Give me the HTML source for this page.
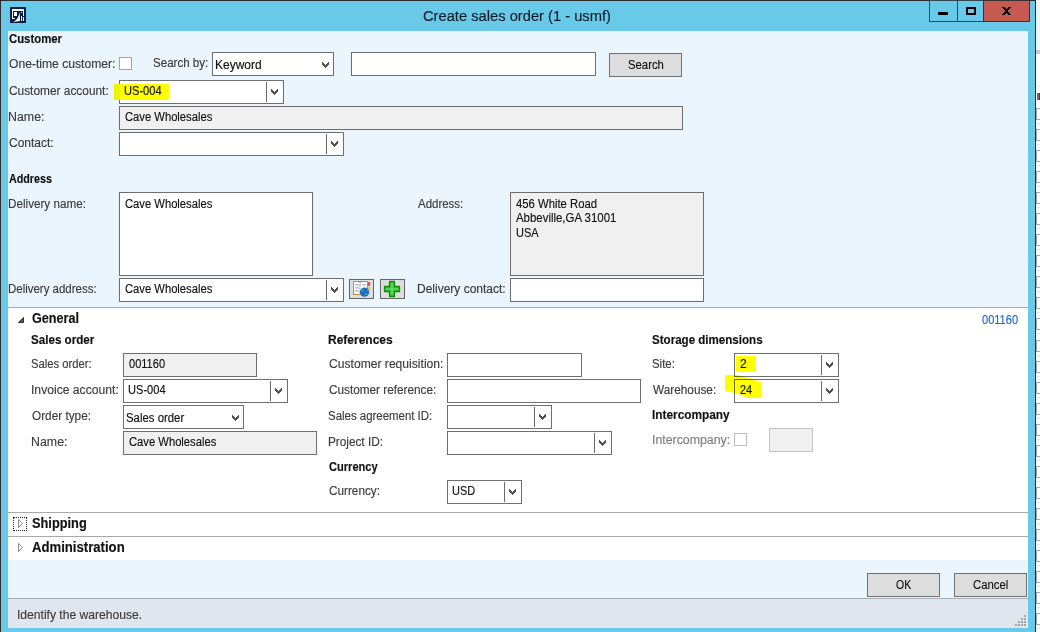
<!DOCTYPE html>
<html><head><meta charset="utf-8"><title>Create sales order</title>
<style>
html,body{margin:0;padding:0;width:1040px;height:632px;overflow:hidden;background:#69c9e9}
.a{position:absolute;box-sizing:border-box}
.t{position:absolute;white-space:nowrap;font-family:"Liberation Sans",sans-serif;transform-origin:0 0;-webkit-text-stroke:0.15px currentColor}
</style></head><body>
<div class="a" style="left:0px;top:0px;width:1040px;height:632px;background:#69c9e9;"></div>
<div class="a" style="left:1036px;top:0px;width:4px;height:632px;background:#ffffff;"></div>
<div class="a" style="left:1036px;top:0px;width:4px;height:50px;background:#eef3f8;"></div>
<div class="a" style="left:1036px;top:50px;width:4px;height:4px;background:#c9c9c9;"></div>
<div class="a" style="left:1036px;top:86px;width:4px;height:1px;background:#e3ecf5;"></div>
<div class="a" style="left:1037px;top:93px;width:2px;height:7px;background:#8a5a6a;"></div>
<div class="a" style="left:1039px;top:93px;width:1px;height:7px;background:#3a3a7a;"></div>
<div class="a" style="left:1036px;top:108px;width:4px;height:12px;background:#ffffff;border:1px solid #a6a6a6;border-right:none;"></div>
<div class="a" style="left:1036px;top:123px;width:4px;height:1px;background:#dde8f4;"></div>
<div class="a" style="left:1036px;top:129px;width:4px;height:12px;background:#ffffff;border:1px solid #a6a6a6;border-right:none;"></div>
<div class="a" style="left:1036px;top:144px;width:4px;height:1px;background:#dde8f4;"></div>
<div class="a" style="left:1036px;top:150px;width:4px;height:12px;background:#ffffff;border:1px solid #a6a6a6;border-right:none;"></div>
<div class="a" style="left:1036px;top:165px;width:4px;height:1px;background:#dde8f4;"></div>
<div class="a" style="left:1036px;top:171px;width:4px;height:12px;background:#ffffff;border:1px solid #a6a6a6;border-right:none;"></div>
<div class="a" style="left:1036px;top:186px;width:4px;height:1px;background:#dde8f4;"></div>
<div class="a" style="left:1036px;top:192px;width:4px;height:12px;background:#ffffff;border:1px solid #a6a6a6;border-right:none;"></div>
<div class="a" style="left:1036px;top:207px;width:4px;height:1px;background:#dde8f4;"></div>
<div class="a" style="left:1036px;top:213px;width:4px;height:12px;background:#ffffff;border:1px solid #a6a6a6;border-right:none;"></div>
<div class="a" style="left:1036px;top:228px;width:4px;height:1px;background:#dde8f4;"></div>
<div class="a" style="left:1036px;top:234px;width:4px;height:12px;background:#ffffff;border:1px solid #a6a6a6;border-right:none;"></div>
<div class="a" style="left:1036px;top:249px;width:4px;height:1px;background:#dde8f4;"></div>
<div class="a" style="left:1036px;top:255px;width:4px;height:12px;background:#ffffff;border:1px solid #a6a6a6;border-right:none;"></div>
<div class="a" style="left:1036px;top:270px;width:4px;height:1px;background:#dde8f4;"></div>
<div class="a" style="left:1036px;top:276px;width:4px;height:12px;background:#ffffff;border:1px solid #a6a6a6;border-right:none;"></div>
<div class="a" style="left:1036px;top:291px;width:4px;height:1px;background:#dde8f4;"></div>
<div class="a" style="left:1036px;top:297px;width:4px;height:12px;background:#ffffff;border:1px solid #a6a6a6;border-right:none;"></div>
<div class="a" style="left:1036px;top:312px;width:4px;height:1px;background:#dde8f4;"></div>
<div class="a" style="left:1036px;top:318px;width:4px;height:12px;background:#ffffff;border:1px solid #a6a6a6;border-right:none;"></div>
<div class="a" style="left:1036px;top:333px;width:4px;height:1px;background:#dde8f4;"></div>
<div class="a" style="left:1036px;top:340px;width:4px;height:12px;background:#ffffff;border:1px solid #a6a6a6;border-right:none;"></div>
<div class="a" style="left:1036px;top:355px;width:4px;height:1px;background:#dde8f4;"></div>
<div class="a" style="left:1036px;top:361px;width:4px;height:12px;background:#ffffff;border:1px solid #a6a6a6;border-right:none;"></div>
<div class="a" style="left:1036px;top:376px;width:4px;height:1px;background:#dde8f4;"></div>
<div class="a" style="left:1036px;top:382px;width:4px;height:12px;background:#ffffff;border:1px solid #a6a6a6;border-right:none;"></div>
<div class="a" style="left:1036px;top:397px;width:4px;height:1px;background:#dde8f4;"></div>
<div class="a" style="left:1036px;top:403px;width:4px;height:12px;background:#ffffff;border:1px solid #a6a6a6;border-right:none;"></div>
<div class="a" style="left:1036px;top:418px;width:4px;height:1px;background:#dde8f4;"></div>
<div class="a" style="left:1036px;top:424px;width:4px;height:12px;background:#ffffff;border:1px solid #a6a6a6;border-right:none;"></div>
<div class="a" style="left:1036px;top:439px;width:4px;height:1px;background:#dde8f4;"></div>
<div class="a" style="left:1036px;top:445px;width:4px;height:12px;background:#ffffff;border:1px solid #a6a6a6;border-right:none;"></div>
<div class="a" style="left:1036px;top:460px;width:4px;height:1px;background:#dde8f4;"></div>
<div class="a" style="left:1036px;top:466px;width:4px;height:12px;background:#ffffff;border:1px solid #a6a6a6;border-right:none;"></div>
<div class="a" style="left:1036px;top:481px;width:4px;height:1px;background:#dde8f4;"></div>
<div class="a" style="left:1036px;top:487px;width:4px;height:12px;background:#ffffff;border:1px solid #a6a6a6;border-right:none;"></div>
<div class="a" style="left:1036px;top:502px;width:4px;height:1px;background:#dde8f4;"></div>
<div class="a" style="left:1036px;top:508px;width:4px;height:12px;background:#ffffff;border:1px solid #a6a6a6;border-right:none;"></div>
<div class="a" style="left:1036px;top:523px;width:4px;height:1px;background:#dde8f4;"></div>
<div class="a" style="left:1036px;top:529px;width:4px;height:12px;background:#ffffff;border:1px solid #a6a6a6;border-right:none;"></div>
<div class="a" style="left:1036px;top:544px;width:4px;height:1px;background:#dde8f4;"></div>
<div class="a" style="left:1036px;top:550px;width:4px;height:12px;background:#ffffff;border:1px solid #a6a6a6;border-right:none;"></div>
<div class="a" style="left:1036px;top:565px;width:4px;height:1px;background:#dde8f4;"></div>
<div class="a" style="left:1036px;top:571px;width:4px;height:12px;background:#ffffff;border:1px solid #a6a6a6;border-right:none;"></div>
<div class="a" style="left:1036px;top:586px;width:4px;height:1px;background:#dde8f4;"></div>
<div class="a" style="left:1036px;top:592px;width:4px;height:12px;background:#ffffff;border:1px solid #a6a6a6;border-right:none;"></div>
<div class="a" style="left:1036px;top:607px;width:4px;height:1px;background:#dde8f4;"></div>
<div class="a" style="left:1036px;top:613px;width:4px;height:12px;background:#ffffff;border:1px solid #a6a6a6;border-right:none;"></div>
<div class="a" style="left:1036px;top:628px;width:4px;height:1px;background:#dde8f4;"></div>
<div class="a" style="left:0px;top:0px;width:1036px;height:1px;background:#2d2d2d;"></div>
<div class="a" style="left:0px;top:0px;width:1px;height:632px;background:#2d2d2d;"></div>
<div class="a" style="left:1035px;top:0px;width:1px;height:632px;background:#2d2d2d;"></div>
<div class="a" style="left:929px;top:0px;width:29px;height:22px;background:#69c9e9;border:1px solid #34474f;"></div>
<div class="a" style="left:957px;top:0px;width:27px;height:22px;background:#69c9e9;border:1px solid #34474f;"></div>
<div class="a" style="left:983px;top:0px;width:47px;height:22px;background:#c75a50;border:1px solid #3d3030;"></div>
<div class="a" style="left:938px;top:12px;width:10px;height:3px;background:#000;"></div>
<div class="a" style="left:966px;top:7px;width:10px;height:8px;border:1px solid #000;border-width:2px;"></div>
<svg class="a" style="left:1002px;top:7px" width="9" height="8" viewBox="0 0 9 8" shape-rendering="crispEdges" fill="#000"><rect x="0" y="0" width="3" height="1"/><rect x="6" y="0" width="3" height="1"/><rect x="1" y="1" width="3" height="1"/><rect x="5" y="1" width="3" height="1"/><rect x="2" y="2" width="5" height="1"/><rect x="3" y="3" width="3" height="1"/><rect x="3" y="4" width="3" height="1"/><rect x="2" y="5" width="5" height="1"/><rect x="1" y="6" width="3" height="1"/><rect x="5" y="6" width="3" height="1"/><rect x="0" y="7" width="3" height="1"/><rect x="6" y="7" width="3" height="1"/></svg>
<svg class="a" style="left:10px;top:7px" width="16" height="16" viewBox="0 0 16 16" shape-rendering="crispEdges"><rect width="16" height="16" fill="#0a1d4a"/><rect x="2" y="2" width="12" height="2" fill="#fff"/><rect x="13" y="2" width="1" height="7" fill="#fff"/><rect x="2" y="2" width="1" height="10" fill="#fff"/><rect x="2" y="11" width="3" height="1" fill="#fff"/><rect x="4" y="5" width="3" height="4" fill="#fff"/><rect x="11" y="5" width="1" height="1" fill="#fff"/><rect x="11" y="9" width="1" height="5" fill="#fff"/><rect x="13" y="10" width="1" height="4" fill="#fff"/></svg>
<svg class="a" style="left:10px;top:7px" width="16" height="16" viewBox="0 0 16 16"><path d="M3.5 15 Q8.5 12.5 9.6 5 L10 14 Z" fill="#fff"/></svg>
<div class="t" style="left:423.05px;top:6px;font-size:15.5px;line-height:20px;color:#0f1a24;transform:scaleX(0.9487);">Create sales order (1 - usmf)</div>
<div class="a" style="left:8px;top:31px;width:1020px;height:597px;background:#eaf5fd;"></div>
<div class="a" style="left:8px;top:308px;width:1020px;height:252px;background:#ffffff;"></div>
<div class="a" style="left:8px;top:307px;width:1020px;height:1px;background:#a9a9a9;"></div>
<div class="a" style="left:8px;top:512px;width:1020px;height:1px;background:#a9a9a9;"></div>
<div class="a" style="left:8px;top:536px;width:1020px;height:1px;background:#a9a9a9;"></div>
<div class="a" style="left:8px;top:598px;width:1020px;height:1px;background:#a3adb8;"></div>
<div class="a" style="left:8px;top:599px;width:1020px;height:29px;background:#dfe6ee;"></div>
<div class="t" style="left:9.00px;top:29px;font-size:12px;line-height:20px;font-weight:700;color:#111111;transform:scaleX(0.9455);">Customer</div>
<div class="t" style="left:9.00px;top:54px;font-size:12px;line-height:20px;color:#3c3c3c;transform:scaleX(1.0097);">One-time customer:</div>
<div class="a" style="left:119px;top:57px;width:13px;height:13px;background:#fff;border:1px solid #a2a2a2;"></div>
<div class="t" style="left:153.04px;top:53px;font-size:12px;line-height:20px;color:#3c3c3c;transform:scaleX(0.9630);">Search by:</div>
<div class="a" style="left:212px;top:52px;width:122px;height:24px;background:#fff;border:1px solid #6e6e6e;"></div>
<svg class="a" style="left:322px;top:62px" width="7" height="6" viewBox="0 0 7 6" shape-rendering="crispEdges" fill="#505050"><rect x="0" y="0" width="1" height="1"/><rect x="6" y="0" width="1" height="1"/><rect x="0" y="1" width="2" height="1"/><rect x="5" y="1" width="2" height="1"/><rect x="0" y="2" width="3" height="1"/><rect x="4" y="2" width="3" height="1"/><rect x="1" y="3" width="5" height="1"/><rect x="2" y="4" width="3" height="1"/><rect x="3" y="5" width="1" height="1"/></svg>
<div class="t" style="left:215.00px;top:55px;font-size:12px;line-height:20px;color:#111111;">Keyword</div>
<div class="a" style="left:351px;top:52px;width:245px;height:24px;background:#fff;border:1px solid #6e6e6e;"></div>
<div class="a" style="left:609px;top:53px;width:73px;height:24px;background:#dddddd;border:1px solid #707070;"></div>
<div class="t" style="left:627.56px;top:55px;font-size:12px;line-height:20px;color:#111111;transform:scaleX(0.9429);">Search</div>
<div class="t" style="left:9.00px;top:81px;font-size:12px;line-height:20px;color:#3c3c3c;transform:scaleX(0.9899);">Customer account:</div>
<div class="a" style="left:119px;top:80px;width:165px;height:24px;background:#fff;border:1px solid #6e6e6e;"></div>
<div class="a" style="left:266px;top:82px;width:1px;height:20px;background:#6a6a6a;"></div>
<svg class="a" style="left:271px;top:89px" width="7" height="6" viewBox="0 0 7 6" shape-rendering="crispEdges" fill="#505050"><rect x="0" y="0" width="1" height="1"/><rect x="6" y="0" width="1" height="1"/><rect x="0" y="1" width="2" height="1"/><rect x="5" y="1" width="2" height="1"/><rect x="0" y="2" width="3" height="1"/><rect x="4" y="2" width="3" height="1"/><rect x="1" y="3" width="5" height="1"/><rect x="2" y="4" width="3" height="1"/><rect x="3" y="5" width="1" height="1"/></svg>
<div class="a" style="left:120px;top:84px;width:49px;height:16px;background:#ffff00;"></div>
<div class="a" style="left:114px;top:84px;width:6px;height:16px;background:#ebf500;"></div>
<div class="t" style="left:124.08px;top:81px;font-size:12px;line-height:20px;color:#111111;transform:scaleX(0.9231);">US-004</div>
<div class="t" style="left:7.97px;top:107px;font-size:12px;line-height:20px;color:#3c3c3c;transform:scaleX(1.0312);">Name:</div>
<div class="a" style="left:119px;top:106px;width:564px;height:24px;background:#f0f0f0;border:1px solid #6e6e6e;"></div>
<div class="t" style="left:125.00px;top:107px;font-size:12px;line-height:20px;color:#111111;transform:scaleX(0.9348);">Cave Wholesales</div>
<div class="t" style="left:9.00px;top:133px;font-size:12px;line-height:20px;color:#3c3c3c;">Contact:</div>
<div class="a" style="left:119px;top:132px;width:225px;height:24px;background:#fff;border:1px solid #6e6e6e;"></div>
<div class="a" style="left:326px;top:134px;width:1px;height:20px;background:#6a6a6a;"></div>
<svg class="a" style="left:331px;top:141px" width="7" height="6" viewBox="0 0 7 6" shape-rendering="crispEdges" fill="#505050"><rect x="0" y="0" width="1" height="1"/><rect x="6" y="0" width="1" height="1"/><rect x="0" y="1" width="2" height="1"/><rect x="5" y="1" width="2" height="1"/><rect x="0" y="2" width="3" height="1"/><rect x="4" y="2" width="3" height="1"/><rect x="1" y="3" width="5" height="1"/><rect x="2" y="4" width="3" height="1"/><rect x="3" y="5" width="1" height="1"/></svg>
<div class="t" style="left:9.00px;top:169px;font-size:12px;line-height:20px;font-weight:700;color:#111111;transform:scaleX(0.8936);">Address</div>
<div class="t" style="left:8.03px;top:194px;font-size:12px;line-height:20px;color:#3c3c3c;transform:scaleX(0.9740);">Delivery name:</div>
<div class="a" style="left:119px;top:192px;width:194px;height:84px;background:#fff;border:1px solid #6e6e6e;"></div>
<div class="t" style="left:125.00px;top:194px;font-size:12px;line-height:20px;color:#111111;transform:scaleX(0.9348);">Cave Wholesales</div>
<div class="t" style="left:418.00px;top:194px;font-size:12px;line-height:20px;color:#3c3c3c;transform:scaleX(0.9556);">Address:</div>
<div class="a" style="left:510px;top:192px;width:194px;height:84px;background:#f0f0f0;border:1px solid #6e6e6e;"></div>
<div class="t" style="left:516.00px;top:194px;font-size:12px;line-height:20px;color:#111111;transform:scaleX(0.9412);">456 White Road</div>
<div class="t" style="left:516.00px;top:208px;font-size:12px;line-height:20px;color:#111111;transform:scaleX(0.9519);">Abbeville,GA 31001</div>
<div class="t" style="left:515.59px;top:223px;font-size:12px;line-height:20px;color:#111111;transform:scaleX(0.9130);">USA</div>
<div class="t" style="left:8.04px;top:279px;font-size:12px;line-height:20px;color:#3c3c3c;transform:scaleX(0.9556);">Delivery address:</div>
<div class="a" style="left:119px;top:278px;width:225px;height:24px;background:#fff;border:1px solid #6e6e6e;"></div>
<div class="a" style="left:326px;top:280px;width:1px;height:20px;background:#6a6a6a;"></div>
<svg class="a" style="left:331px;top:287px" width="7" height="6" viewBox="0 0 7 6" shape-rendering="crispEdges" fill="#505050"><rect x="0" y="0" width="1" height="1"/><rect x="6" y="0" width="1" height="1"/><rect x="0" y="1" width="2" height="1"/><rect x="5" y="1" width="2" height="1"/><rect x="0" y="2" width="3" height="1"/><rect x="4" y="2" width="3" height="1"/><rect x="1" y="3" width="5" height="1"/><rect x="2" y="4" width="3" height="1"/><rect x="3" y="5" width="1" height="1"/></svg>
<div class="t" style="left:125.00px;top:279px;font-size:12px;line-height:20px;color:#111111;transform:scaleX(0.9348);">Cave Wholesales</div>
<div class="a" style="left:349px;top:279px;width:25px;height:20px;background:#dddddd;border:1px solid #666;"></div>
<div class="a" style="left:380px;top:279px;width:25px;height:20px;background:#dddddd;border:1px solid #666;"></div>
<svg class="a" style="left:350px;top:280px" width="23" height="18" viewBox="0 0 23 18"><rect x="3.5" y="1.5" width="14" height="13" fill="#fff" stroke="#c8883a" stroke-width="1"/><rect x="18" y="2" width="2" height="4" fill="#e85050"/><rect x="18" y="7" width="2" height="4" fill="#f0c020"/><g fill="#b9c3d0"><rect x="5" y="4" width="4" height="1.6"/><rect x="5" y="7" width="4" height="1.6"/><rect x="5" y="10" width="4" height="1.6"/><rect x="12" y="4" width="4" height="1.6"/></g><path d="M10 2 V14" stroke="#777" stroke-width="1" stroke-dasharray="1 1"/><circle cx="14.5" cy="12.2" r="4.6" fill="#1f6ad0"/><path d="M11.5 10.5 Q13 9 14 10.5 L12.5 12 Z M15 13.5 Q17 12.5 17.5 14.5 L15.5 15.5 Z M17 9 L18.5 10.5 L17.5 11.5 Z" fill="#3ec23a"/></svg>
<svg class="a" style="left:380px;top:279px" width="25" height="20" viewBox="0 0 25 20"><path d="M9.5 2.5 H14.5 V7.5 H19.5 V12.5 H14.5 V17.5 H9.5 V12.5 H4.5 V7.5 H9.5 Z" fill="#39c339" stroke="#0b8f0b" stroke-width="1.3" stroke-linejoin="round"/><path d="M12 4 V16 M6 10 H18" stroke="#8fe88f" stroke-width="1.2" opacity="0.7"/></svg>
<div class="t" style="left:417.00px;top:279px;font-size:12px;line-height:20px;color:#3c3c3c;">Delivery contact:</div>
<div class="a" style="left:510px;top:278px;width:194px;height:24px;background:#fff;border:1px solid #6e6e6e;"></div>
<svg class="a" style="left:18px;top:317px" width="6" height="6" viewBox="0 0 6 6"><path d="M5.5 0.5 V5.5 H0.5 Z" fill="#595959" stroke="#333" stroke-width="1" stroke-linejoin="round"/></svg>
<div class="t" style="left:32.00px;top:308px;font-size:14px;line-height:20px;font-weight:700;color:#111111;transform:scaleX(0.9000);">General</div>
<div class="t" style="left:982.00px;top:310px;font-size:12px;line-height:20px;color:#1d66d0;transform:scaleX(0.9211);">001160</div>
<div class="t" style="left:31.03px;top:330px;font-size:12px;line-height:20px;font-weight:700;color:#111111;transform:scaleX(0.9683);">Sales order</div>
<div class="t" style="left:31.06px;top:354px;font-size:12px;line-height:20px;color:#3c3c3c;transform:scaleX(0.9355);">Sales order:</div>
<div class="a" style="left:123px;top:353px;width:134px;height:24px;background:#f0f0f0;border:1px solid #6e6e6e;"></div>
<div class="t" style="left:129.00px;top:354px;font-size:12px;line-height:20px;color:#111111;transform:scaleX(0.9211);">001160</div>
<div class="t" style="left:30.99px;top:380px;font-size:12px;line-height:20px;color:#3c3c3c;transform:scaleX(1.0119);">Invoice account:</div>
<div class="a" style="left:123px;top:379px;width:165px;height:24px;background:#fff;border:1px solid #6e6e6e;"></div>
<div class="a" style="left:270px;top:381px;width:1px;height:20px;background:#6a6a6a;"></div>
<svg class="a" style="left:275px;top:388px" width="7" height="6" viewBox="0 0 7 6" shape-rendering="crispEdges" fill="#505050"><rect x="0" y="0" width="1" height="1"/><rect x="6" y="0" width="1" height="1"/><rect x="0" y="1" width="2" height="1"/><rect x="5" y="1" width="2" height="1"/><rect x="0" y="2" width="3" height="1"/><rect x="4" y="2" width="3" height="1"/><rect x="1" y="3" width="5" height="1"/><rect x="2" y="4" width="3" height="1"/><rect x="3" y="5" width="1" height="1"/></svg>
<div class="t" style="left:128.08px;top:380px;font-size:12px;line-height:20px;color:#111111;transform:scaleX(0.9231);">US-004</div>
<div class="t" style="left:32.00px;top:406px;font-size:12px;line-height:20px;color:#3c3c3c;transform:scaleX(0.9828);">Order type:</div>
<div class="a" style="left:123px;top:405px;width:121px;height:24px;background:#fff;border:1px solid #6e6e6e;"></div>
<svg class="a" style="left:232px;top:415px" width="7" height="6" viewBox="0 0 7 6" shape-rendering="crispEdges" fill="#505050"><rect x="0" y="0" width="1" height="1"/><rect x="6" y="0" width="1" height="1"/><rect x="0" y="1" width="2" height="1"/><rect x="5" y="1" width="2" height="1"/><rect x="0" y="2" width="3" height="1"/><rect x="4" y="2" width="3" height="1"/><rect x="1" y="3" width="5" height="1"/><rect x="2" y="4" width="3" height="1"/><rect x="3" y="5" width="1" height="1"/></svg>
<div class="t" style="left:126.05px;top:408px;font-size:12px;line-height:20px;color:#111111;transform:scaleX(0.9492);">Sales order</div>
<div class="t" style="left:30.97px;top:432px;font-size:12px;line-height:20px;color:#3c3c3c;transform:scaleX(1.0312);">Name:</div>
<div class="a" style="left:123px;top:431px;width:194px;height:24px;background:#f0f0f0;border:1px solid #6e6e6e;"></div>
<div class="t" style="left:129.00px;top:432px;font-size:12px;line-height:20px;color:#111111;transform:scaleX(0.9348);">Cave Wholesales</div>
<div class="t" style="left:328.00px;top:330px;font-size:12px;line-height:20px;font-weight:700;color:#111111;">References</div>
<div class="t" style="left:329.00px;top:354px;font-size:12px;line-height:20px;color:#3c3c3c;transform:scaleX(1.0090);">Customer requisition:</div>
<div class="a" style="left:447px;top:353px;width:135px;height:24px;background:#fff;border:1px solid #6e6e6e;"></div>
<div class="t" style="left:329.00px;top:380px;font-size:12px;line-height:20px;color:#3c3c3c;transform:scaleX(0.9813);">Customer reference:</div>
<div class="a" style="left:447px;top:379px;width:194px;height:24px;background:#fff;border:1px solid #6e6e6e;"></div>
<div class="t" style="left:328.05px;top:406px;font-size:12px;line-height:20px;color:#3c3c3c;transform:scaleX(0.9528);">Sales agreement ID:</div>
<div class="a" style="left:447px;top:405px;width:105px;height:24px;background:#fff;border:1px solid #6e6e6e;"></div>
<div class="a" style="left:534px;top:407px;width:1px;height:20px;background:#6a6a6a;"></div>
<svg class="a" style="left:539px;top:414px" width="7" height="6" viewBox="0 0 7 6" shape-rendering="crispEdges" fill="#505050"><rect x="0" y="0" width="1" height="1"/><rect x="6" y="0" width="1" height="1"/><rect x="0" y="1" width="2" height="1"/><rect x="5" y="1" width="2" height="1"/><rect x="0" y="2" width="3" height="1"/><rect x="4" y="2" width="3" height="1"/><rect x="1" y="3" width="5" height="1"/><rect x="2" y="4" width="3" height="1"/><rect x="3" y="5" width="1" height="1"/></svg>
<div class="t" style="left:328.02px;top:432px;font-size:12px;line-height:20px;color:#3c3c3c;transform:scaleX(0.9811);">Project ID:</div>
<div class="a" style="left:447px;top:431px;width:165px;height:24px;background:#fff;border:1px solid #6e6e6e;"></div>
<div class="a" style="left:594px;top:433px;width:1px;height:20px;background:#6a6a6a;"></div>
<svg class="a" style="left:599px;top:440px" width="7" height="6" viewBox="0 0 7 6" shape-rendering="crispEdges" fill="#505050"><rect x="0" y="0" width="1" height="1"/><rect x="6" y="0" width="1" height="1"/><rect x="0" y="1" width="2" height="1"/><rect x="5" y="1" width="2" height="1"/><rect x="0" y="2" width="3" height="1"/><rect x="4" y="2" width="3" height="1"/><rect x="1" y="3" width="5" height="1"/><rect x="2" y="4" width="3" height="1"/><rect x="3" y="5" width="1" height="1"/></svg>
<div class="t" style="left:329.00px;top:457px;font-size:12px;line-height:20px;font-weight:700;color:#111111;transform:scaleX(0.9231);">Currency</div>
<div class="t" style="left:329.00px;top:481px;font-size:12px;line-height:20px;color:#3c3c3c;transform:scaleX(0.9800);">Currency:</div>
<div class="a" style="left:447px;top:480px;width:75px;height:24px;background:#fff;border:1px solid #6e6e6e;"></div>
<div class="a" style="left:504px;top:482px;width:1px;height:20px;background:#6a6a6a;"></div>
<svg class="a" style="left:509px;top:489px" width="7" height="6" viewBox="0 0 7 6" shape-rendering="crispEdges" fill="#505050"><rect x="0" y="0" width="1" height="1"/><rect x="6" y="0" width="1" height="1"/><rect x="0" y="1" width="2" height="1"/><rect x="5" y="1" width="2" height="1"/><rect x="0" y="2" width="3" height="1"/><rect x="4" y="2" width="3" height="1"/><rect x="1" y="3" width="5" height="1"/><rect x="2" y="4" width="3" height="1"/><rect x="3" y="5" width="1" height="1"/></svg>
<div class="t" style="left:452.09px;top:481px;font-size:12px;line-height:20px;color:#111111;transform:scaleX(0.9130);">USD</div>
<div class="t" style="left:652.04px;top:330px;font-size:12px;line-height:20px;font-weight:700;color:#111111;transform:scaleX(0.9643);">Storage dimensions</div>
<div class="t" style="left:652.05px;top:354px;font-size:12px;line-height:20px;color:#3c3c3c;transform:scaleX(0.9524);">Site:</div>
<div class="a" style="left:734px;top:353px;width:105px;height:24px;background:#fff;border:1px solid #6e6e6e;"></div>
<div class="a" style="left:821px;top:355px;width:1px;height:20px;background:#6a6a6a;"></div>
<svg class="a" style="left:826px;top:362px" width="7" height="6" viewBox="0 0 7 6" shape-rendering="crispEdges" fill="#505050"><rect x="0" y="0" width="1" height="1"/><rect x="6" y="0" width="1" height="1"/><rect x="0" y="1" width="2" height="1"/><rect x="5" y="1" width="2" height="1"/><rect x="0" y="2" width="3" height="1"/><rect x="4" y="2" width="3" height="1"/><rect x="1" y="3" width="5" height="1"/><rect x="2" y="4" width="3" height="1"/><rect x="3" y="5" width="1" height="1"/></svg>
<div class="a" style="left:736px;top:356px;width:20px;height:16px;background:#ffff00;mix-blend-mode:multiply;"></div>
<div class="t" style="left:740.00px;top:354px;font-size:12px;line-height:20px;color:#111111;">2</div>
<div class="t" style="left:653.00px;top:380px;font-size:12px;line-height:20px;color:#3c3c3c;transform:scaleX(0.9839);">Warehouse:</div>
<div class="a" style="left:734px;top:379px;width:105px;height:24px;background:#fff;border:1px solid #6e6e6e;"></div>
<div class="a" style="left:821px;top:381px;width:1px;height:20px;background:#6a6a6a;"></div>
<svg class="a" style="left:826px;top:388px" width="7" height="6" viewBox="0 0 7 6" shape-rendering="crispEdges" fill="#505050"><rect x="0" y="0" width="1" height="1"/><rect x="6" y="0" width="1" height="1"/><rect x="0" y="1" width="2" height="1"/><rect x="5" y="1" width="2" height="1"/><rect x="0" y="2" width="3" height="1"/><rect x="4" y="2" width="3" height="1"/><rect x="1" y="3" width="5" height="1"/><rect x="2" y="4" width="3" height="1"/><rect x="3" y="5" width="1" height="1"/></svg>
<svg class="a" style="left:720px;top:370px;mix-blend-mode:multiply" width="50" height="35" viewBox="720 370 50 35"><path d="M725 375 L738 375 L744 377 L750 378.5 L754 380 L759 381.5 L761 382 L761 398 L750 398 L744 396.5 L740 394.5 L734 393 L729 391.5 L725 391 Z" fill="#ffff00"/></svg>
<div class="t" style="left:740.00px;top:380px;font-size:12px;line-height:20px;color:#111111;transform:scaleX(0.9167);">24</div>
<div class="t" style="left:652.01px;top:405px;font-size:12px;line-height:20px;font-weight:700;color:#111111;transform:scaleX(0.9870);">Intercompany</div>
<div class="t" style="left:651.97px;top:430px;font-size:12px;line-height:20px;color:#7d7d7d;transform:scaleX(1.0274);">Intercompany:</div>
<div class="a" style="left:734px;top:433px;width:13px;height:13px;background:#fff;border:1px solid #bdbdbd;"></div>
<div class="a" style="left:769px;top:428px;width:44px;height:24px;background:#f0f0f0;border:1px solid #c3c3c3;"></div>
<div class="a" style="left:13px;top:517px;width:14px;height:14px;border:1px solid #222;border-style:dotted;"></div>
<svg class="a" style="left:17px;top:518px" width="8" height="11" viewBox="0 0 8 11"><path d="M1.5 1.5 L5.5 5.5 L1.5 9.5 Z" fill="#fff" stroke="#8a8a8a" stroke-width="1"/></svg>
<div class="t" style="left:32.00px;top:513px;font-size:14px;line-height:20px;font-weight:700;color:#111111;transform:scaleX(0.9138);">Shipping</div>
<svg class="a" style="left:17px;top:542px" width="8" height="11" viewBox="0 0 8 11"><path d="M1.5 1.5 L5.5 5.5 L1.5 9.5 Z" fill="#fff" stroke="#8a8a8a" stroke-width="1"/></svg>
<div class="t" style="left:32.00px;top:537px;font-size:14px;line-height:20px;font-weight:700;color:#111111;transform:scaleX(0.9381);">Administration</div>
<div class="a" style="left:867px;top:573px;width:73px;height:24px;background:#dddddd;border:1px solid #707070;"></div>
<div class="t" style="left:896.00px;top:575px;font-size:12px;line-height:20px;color:#111111;transform:scaleX(0.8750);">OK</div>
<div class="a" style="left:954px;top:573px;width:73px;height:24px;background:#dddddd;border:1px solid #707070;"></div>
<div class="t" style="left:973.00px;top:575px;font-size:12px;line-height:20px;color:#111111;transform:scaleX(0.9444);">Cancel</div>
<div class="t" style="left:16.99px;top:605px;font-size:12px;line-height:20px;color:#3c3c3c;transform:scaleX(1.0083);">Identify the warehouse.</div>
<div class="a" style="left:1024px;top:615px;width:2px;height:2px;background:#a4a4a4;"></div>
<div class="a" style="left:1021px;top:618px;width:2px;height:2px;background:#a4a4a4;"></div>
<div class="a" style="left:1024px;top:618px;width:2px;height:2px;background:#a4a4a4;"></div>
<div class="a" style="left:1018px;top:621px;width:2px;height:2px;background:#a4a4a4;"></div>
<div class="a" style="left:1021px;top:621px;width:2px;height:2px;background:#a4a4a4;"></div>
<div class="a" style="left:1024px;top:621px;width:2px;height:2px;background:#a4a4a4;"></div>
<div class="a" style="left:1015px;top:624px;width:2px;height:2px;background:#a4a4a4;"></div>
<div class="a" style="left:1018px;top:624px;width:2px;height:2px;background:#a4a4a4;"></div>
<div class="a" style="left:1021px;top:624px;width:2px;height:2px;background:#a4a4a4;"></div>
<div class="a" style="left:1024px;top:624px;width:2px;height:2px;background:#a4a4a4;"></div>
</body></html>
